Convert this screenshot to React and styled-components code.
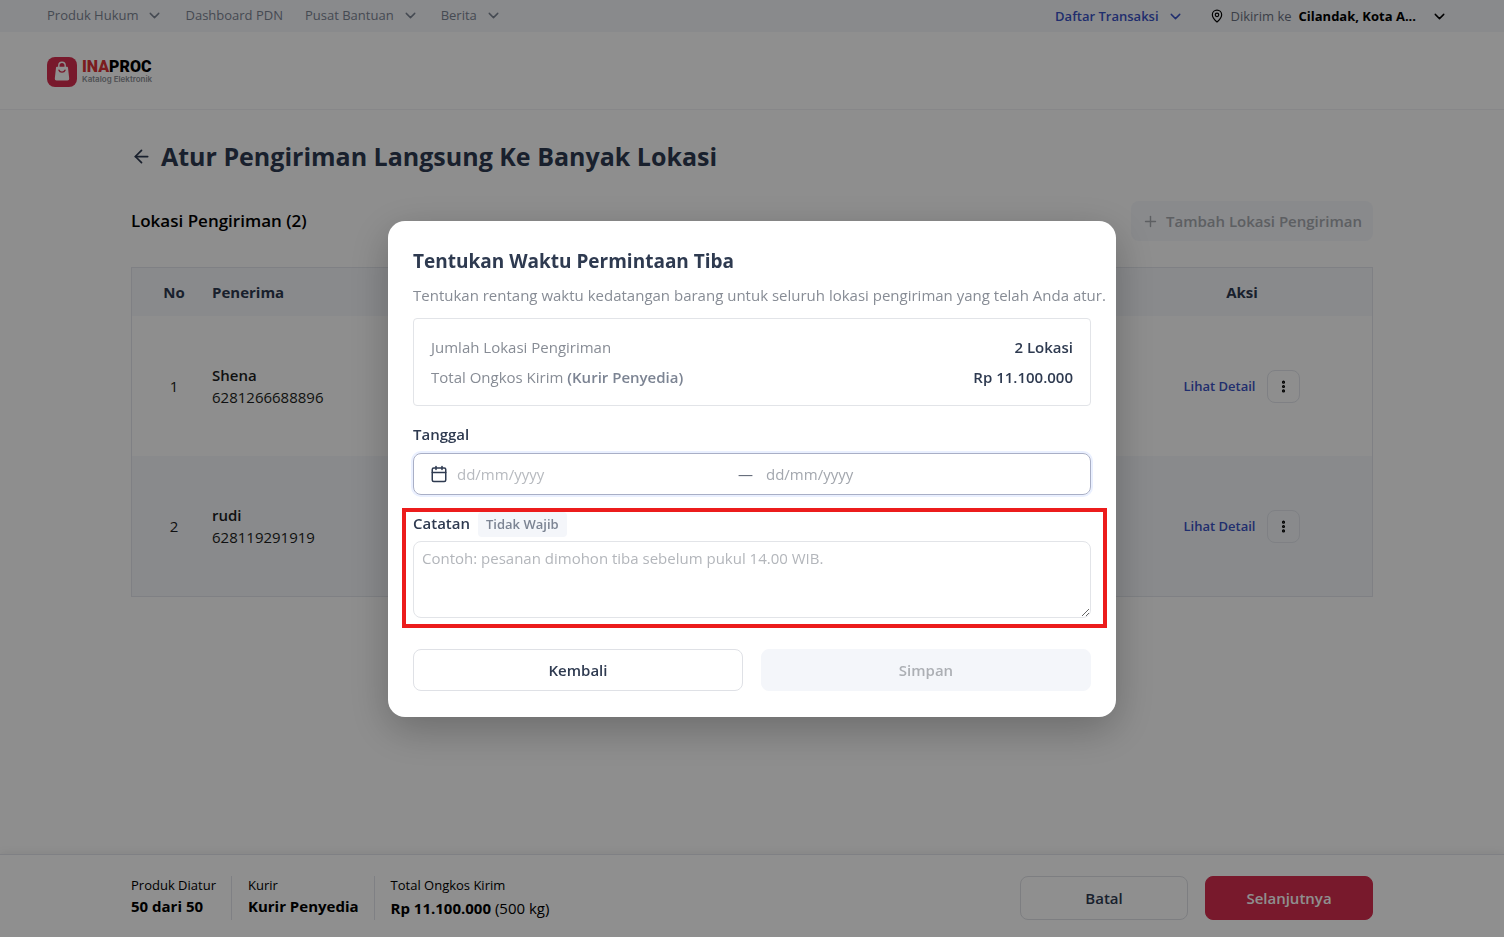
import React from "react";
import styled, { createGlobalStyle, css } from "styled-components";
import {
  ArrowLeft,
  Calendar,
  ChevronDown,
  EllipsisVertical,
  MapPin,
  Plus,
} from "lucide-react";

const menus = [
  { label: "Produk Hukum", dropdown: true },
  { label: "Dashboard PDN", dropdown: false },
  { label: "Pusat Bantuan", dropdown: true },
  { label: "Berita", dropdown: true },
];

const recipients = [
  { no: 1, name: "Shena", phone: "6281266688896" },
  { no: 2, name: "rudi", phone: "628119291919" },
];

const Logo = () => (
  <LogoLink href="#">
    <svg width="30" height="30" viewBox="0 0 30 30" aria-hidden="true">
      <rect width="30" height="30" rx="8" fill="#d62e4f" />
      <path
        d="M11.8 10.5V8.4a3.2 3.2 0 0 1 6.4 0v2.1"
        fill="none"
        stroke="#fff"
        strokeWidth="1.4"
      />
      <path
        d="M10 9.8h10a1 1 0 0 1 1 .9l1.2 10.8a1.8 1.8 0 0 1-1.8 2H9.6a1.8 1.8 0 0 1-1.8-2L9 10.7a1 1 0 0 1 1-.9z"
        fill="#fff"
      />
      <path
        d="M12 13.2c.8 2.6 5.2 2.6 6 0"
        fill="none"
        stroke="#d62e4f"
        strokeWidth="1.4"
        strokeLinecap="round"
      />
    </svg>
    <LogoText>
      <LogoName>
        <span>INA</span>PROC
      </LogoName>
      <LogoTagline>Katalog Elektronik</LogoTagline>
    </LogoText>
  </LogoLink>
);

const TopBar = () => (
  <TopBarContainer>
    <Menu>
      {menus.map(({ label, dropdown }) => (
        <MenuLink key={label} href="#">
          {label}
          {dropdown && <ChevronDown size={17} />}
        </MenuLink>
      ))}
    </Menu>
    <UserMenu>
      <TransactionButton type="button">
        Daftar Transaksi
        <ChevronDown size={17} />
      </TransactionButton>
      <LocationButton type="button">
        <MapPin size={14} />
        <span>Dikirim ke</span>
        <strong>Cilandak, Kota A...</strong>
        <ChevronDown size={17} />
      </LocationButton>
    </UserMenu>
  </TopBarContainer>
);

const RecipientTable = () => (
  <Table>
    <thead>
      <tr>
        <HeadCell $width="80px" $kind="number">No</HeadCell>
        <HeadCell>Penerima</HeadCell>
        <HeadCell $width="260px" $kind="center">Aksi</HeadCell>
      </tr>
    </thead>
    <tbody>
      {recipients.map(({ no, name, phone }) => (
        <Row key={no}>
          <Cell $kind="number">{no}</Cell>
          <Cell>
            <Name>{name}</Name>
            <div>{phone}</div>
          </Cell>
          <Cell>
            <Actions>
              <DetailLink href="#">Lihat Detail</DetailLink>
              <MoreButton type="button" aria-label={`Aksi ${name}`}>
                <EllipsisVertical size={15} strokeWidth={3} />
              </MoreButton>
            </Actions>
          </Cell>
        </Row>
      ))}
    </tbody>
  </Table>
);

const ArrivalModal = () => (
  <Overlay>
    <Modal role="dialog" aria-modal="true" aria-labelledby="modal-title">
      <ModalTitle id="modal-title">Tentukan Waktu Permintaan Tiba</ModalTitle>
      <ModalText>
        Tentukan rentang waktu kedatangan barang untuk seluruh lokasi pengiriman yang telah Anda atur.
      </ModalText>

      <Summary>
        <SummaryRow>
          <dt>Jumlah Lokasi Pengiriman</dt>
          <dd>2 Lokasi</dd>
        </SummaryRow>
        <SummaryRow>
          <dt>
            Total Ongkos Kirim <b>(Kurir Penyedia)</b>
          </dt>
          <dd>Rp 11.100.000</dd>
        </SummaryRow>
      </Summary>

      <DateField>
        <Label id="date-label" htmlFor="start-date">Tanggal</Label>
        <DateRange>
          <DateStart>
            <Calendar size={18} />
            <DateInput id="start-date" placeholder="dd/mm/yyyy" $light />
          </DateStart>
          <Dash>—</Dash>
          <DateInput aria-labelledby="date-label" placeholder="dd/mm/yyyy" />
        </DateRange>
      </DateField>

      <NoteField>
        <NoteHeading>
          <Label htmlFor="note">Catatan</Label>
          <Badge>Tidak Wajib</Badge>
        </NoteHeading>
        <NoteInput
          id="note"
          placeholder="Contoh: pesanan dimohon tiba sebelum pukul 14.00 WIB."
        />
      </NoteField>

      <ModalActions>
        <Button type="button">Kembali</Button>
        <Button type="button" $variant="disabled" disabled>Simpan</Button>
      </ModalActions>
    </Modal>
  </Overlay>
);

const App = () => {
  return (
    <>
      <GlobalStyle />
      <Page>
        <TopBar />
        <Header>
          <Logo />
        </Header>
        <Main>
          <TitleRow>
            <BackButton type="button" aria-label="Kembali">
              <ArrowLeft size={21} />
            </BackButton>
            <Title>Atur Pengiriman Langsung Ke Banyak Lokasi</Title>
          </TitleRow>
          <SectionRow>
            <SectionTitle>Lokasi Pengiriman (2)</SectionTitle>
            <AddButton type="button" disabled>
              <Plus size={17} />
              Tambah Lokasi Pengiriman
            </AddButton>
          </SectionRow>
          <RecipientTable />
        </Main>
        <Footer>
          <FooterInner>
            <Stat>
              <small>Produk Diatur</small>
              <p><b>50 dari 50</b></p>
            </Stat>
            <Stat>
              <small>Kurir</small>
              <p><b>Kurir Penyedia</b></p>
            </Stat>
            <Stat $last>
              <small>Total Ongkos Kirim</small>
              <p><b>Rp 11.100.000</b> (500 kg)</p>
            </Stat>
            <FooterActions>
              <FooterButton type="button">Batal</FooterButton>
              <FooterButton type="button" $variant="primary">Selanjutnya</FooterButton>
            </FooterActions>
          </FooterInner>
        </Footer>
      </Page>
      <ArrivalModal />
    </>
  );
};

export default App;

const GlobalStyle = createGlobalStyle`
  * {
    box-sizing: border-box;
  }

  body {
    margin: 0;
    font-family: "Open Sans", "Noto Sans", sans-serif;
    font-size: 15px;
    line-height: 22px;
    color: #1c1d20;
    background: #fdfdfd;
  }

  button, input, textarea {
    font: inherit;
  }

  h1, h2, p, dl, dd {
    margin: 0;
  }

  a {
    text-decoration: none;
  }
`;

const plainButton = css`
  display: flex;
  align-items: center;
  padding: 0;
  border: 0;
  background: none;
  cursor: pointer;
`;

const Page = styled.div`
  display: flex;
  flex-direction: column;
  min-height: 100vh;
`;

const TopBarContainer = styled.nav`
  display: flex;
  justify-content: space-between;
  height: 32px;
  padding: 0 56px 0 47px;
  font-size: 13px;
  background: #f4f6fa;
`;

const Menu = styled.div`
  display: flex;
  align-items: center;
  gap: 22px;
  height: 30px;
`;

const MenuLink = styled.a`
  display: flex;
  align-items: center;
  gap: 8px;
  color: #7c8493;
`;

const UserMenu = styled.div`
  display: flex;
  align-items: center;
  gap: 26px;
`;

const TransactionButton = styled.button`
  ${plainButton}
  gap: 8px;
  font-weight: 600;
  color: #3a52c4;
`;

const LocationButton = styled.button`
  ${plainButton}
  gap: 7px;
  color: #000;

  span {
    color: #6a7180;
  }

  strong {
    font-weight: 700;
  }

  svg:last-child {
    margin-left: 8px;
  }
`;

const Header = styled.header`
  display: flex;
  align-items: center;
  height: 78px;
  padding: 2px 47px 0;
  background: #fff;
  border-bottom: 1px solid #f0f1f4;
`;

const LogoLink = styled.a`
  display: flex;
  align-items: center;
  gap: 5px;
`;

const LogoText = styled.div`
  display: flex;
  flex-direction: column;
`;

const LogoName = styled.span`
  font-family: Roboto, "Liberation Sans", sans-serif;
  font-size: 16px;
  font-weight: 900;
  line-height: 16px;
  color: #000;

  span {
    color: #dc3236;
  }
`;

const LogoTagline = styled.span`
  font-family: Inter, "Open Sans", sans-serif;
  font-size: 8px;
  font-weight: 600;
  line-height: 9px;
  color: #8d9096;
`;

const Main = styled.main`
  flex: 1;
  width: 100%;
  max-width: 1274px;
  margin: 0 auto;
  padding: 28px 16px;
`;

const TitleRow = styled.div`
  display: flex;
  align-items: center;
  gap: 9px;
  height: 36px;
`;

const BackButton = styled.button`
  ${plainButton}
  color: #2e3a50;
`;

const Title = styled.h1`
  font-size: 25px;
  line-height: 36px;
  font-weight: 700;
  color: #2e3a50;
`;

const SectionRow = styled.div`
  display: flex;
  align-items: center;
  justify-content: space-between;
  margin: 27px 0 26px;
`;

const SectionTitle = styled.h2`
  font-size: 17px;
  font-weight: 600;
  color: #000;
`;

const AddButton = styled.button`
  display: flex;
  align-items: center;
  gap: 7px;
  height: 40px;
  padding: 0 11px;
  border: 0;
  border-radius: 8px;
  font-weight: 600;
  color: #a6a9af;
  background: #f4f6fa;
`;

const Table = styled.table`
  width: 100%;
  border: 1px solid #e2e5eb;
  border-collapse: separate;
  border-spacing: 0;
  table-layout: fixed;
`;

const cellKind = css`
  text-align: ${({ $kind }) => ($kind ? "center" : "left")};
  padding: 0 0 0 ${({ $kind }) => ($kind === "number" ? "4px" : "0")};
`;

const HeadCell = styled.th`
  ${cellKind}
  width: ${({ $width }) => $width || "auto"};
  height: 48px;
  font-weight: 700;
  color: #2e3a50;
  background: #f4f6fa;
`;

const Row = styled.tr`
  &:nth-child(even) {
    background: #f4f6fa;
  }
`;

const Cell = styled.td`
  ${cellKind}
  height: 140px;
`;

const Name = styled.div`
  font-weight: 600;
`;

const Actions = styled.div`
  display: flex;
  align-items: center;
  justify-content: center;
  gap: 12px;
`;

const DetailLink = styled.a`
  font-size: 13px;
  font-weight: 600;
  color: #3a52c4;
`;

const MoreButton = styled.button`
  ${plainButton}
  justify-content: center;
  width: 33px;
  height: 33px;
  border: 1px solid #e2e5eb;
  border-radius: 8px;
  color: #000;
`;

const Footer = styled.footer`
  padding: 21px 16px 17px;
  background: #fff;
  border-top: 1px solid #e2e5eb;
  box-shadow: 0 -2px 8px rgba(0, 0, 0, 0.06);
`;

const FooterInner = styled.div`
  display: flex;
  width: 100%;
  max-width: 1242px;
  margin: 0 auto;
`;

const Stat = styled.div`
  height: 44px;
  padding-right: 15px;
  margin-right: 16px;
  border-right: ${({ $last }) => ($last ? "0" : "1px solid #e2e5eb")};
  color: #000;

  small {
    display: block;
    font-size: 13px;
    line-height: 19px;
  }

  p {
    margin-top: ${({ $last }) => ($last ? "2px" : "0")};
  }
`;

const FooterActions = styled.div`
  display: flex;
  gap: 17px;
  margin-left: auto;
`;

const Button = styled.button`
  flex: 1;
  height: 42px;
  border: 1px solid #dfe1e6;
  border-radius: 8px;
  font-weight: 600;
  color: #2e3a50;
  background: #fff;
  cursor: pointer;

  ${({ $variant }) =>
    $variant === "primary" &&
    css`
      border-color: #d62e4f;
      color: #fff;
      background: #d62e4f;
    `}

  ${({ $variant }) =>
    $variant === "disabled" &&
    css`
      border-color: #f4f6fa;
      color: #acafb4;
      background: #f4f6fa;
      cursor: default;
    `}
`;

const FooterButton = styled(Button)`
  flex: none;
  width: 168px;
  height: 44px;
`;

const Overlay = styled.div`
  position: fixed;
  inset: 0;
  z-index: 10;
  display: flex;
  align-items: center;
  justify-content: center;
  background: rgba(0, 0, 0, 0.44);
`;

const Modal = styled.section`
  width: 728px;
  max-width: 100%;
  padding: 26px 25px;
  border-radius: 17px;
  background: #fff;
  box-shadow: 0 12px 40px rgba(0, 0, 0, 0.25);
`;

const ModalTitle = styled.h2`
  font-size: 19px;
  line-height: 28px;
  font-weight: 700;
  color: #2e3a50;
`;

const ModalText = styled.p`
  margin: 8px 0 11px;
  line-height: 24px;
  white-space: nowrap;
  color: #878c95;
`;

const Summary = styled.dl`
  display: grid;
  gap: 8px;
  padding: 17px;
  border: 1px solid #e2e4e8;
  border-radius: 4px;
`;

const SummaryRow = styled.div`
  display: flex;
  justify-content: space-between;
  color: #878c95;

  b {
    font-weight: 600;
    color: #7c8493;
  }

  dd {
    font-weight: 600;
    color: #2e3a50;
  }
`;

const DateField = styled.div`
  display: grid;
  gap: 8px;
  margin-top: 17px;
`;

const Label = styled.label`
  font-weight: 600;
  color: #2e3a50;
`;

const DateRange = styled.div`
  display: flex;
  align-items: center;
  height: 42px;
  padding: 0 16px;
  border: 1px solid #a9afc6;
  border-radius: 8px;
  box-shadow: 0 0 0 2px #eaf0ff;
`;

const DateStart = styled.div`
  display: flex;
  flex: 1;
  align-items: center;
  gap: 9px;
  color: #2e3a50;
`;

const DateInput = styled.input`
  flex: 1;
  min-width: 0;
  padding: 0;
  border: 0;
  outline: none;
  color: #2e3a50;
  background: none;

  &::placeholder {
    color: ${({ $light }) => ($light ? "#b7babf" : "#a3a7ae")};
    opacity: 1;
  }
`;

const Dash = styled.span`
  margin-right: 13px;
  color: #5f6775;
`;

/* the red frame marks the optional field and hangs outside it */
const NoteField = styled.div`
  position: relative;
  display: grid;
  gap: 4px;
  margin-top: 17px;

  &::after {
    content: "";
    position: absolute;
    inset: -4px -16px -10px -11px;
    border: 4px solid #ec1c1c;
    pointer-events: none;
  }
`;

const NoteHeading = styled.div`
  display: flex;
  align-items: flex-start;
  gap: 8px;
`;

const Badge = styled.span`
  padding: 0 8px;
  border-radius: 4px;
  font-size: 13px;
  line-height: 25px;
  font-weight: 600;
  color: #7c8493;
  background: #f4f6fa;
`;

const NoteInput = styled.textarea`
  display: block;
  width: 100%;
  height: 77px;
  padding: 5px 8px;
  border: 1px solid #e2e4e8;
  border-radius: 8px;
  outline: none;
  color: #2e3a50;
  resize: vertical;

  &::placeholder {
    color: #b3b6bb;
    opacity: 1;
  }
`;

const ModalActions = styled.div`
  display: flex;
  gap: 18px;
  margin-top: 31px;
`;
